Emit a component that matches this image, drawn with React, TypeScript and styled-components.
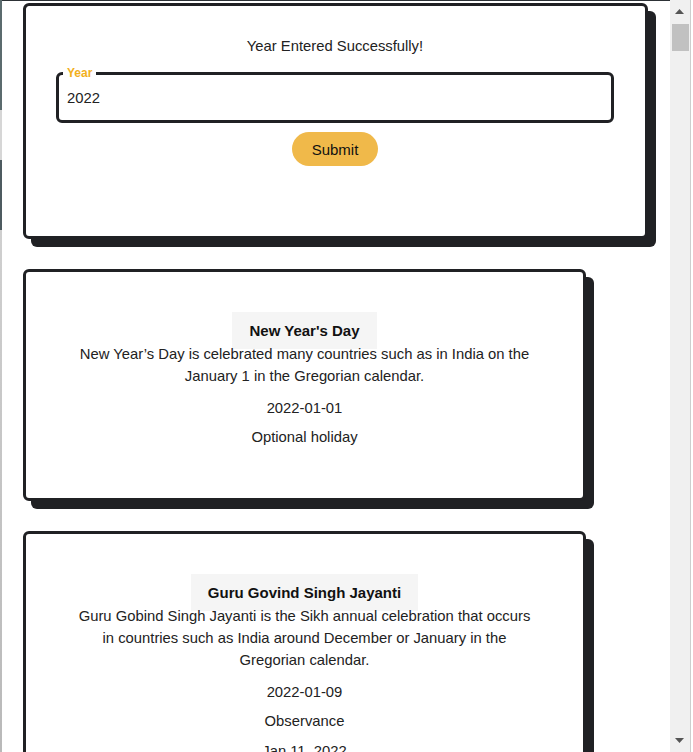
import React from "react";
import styled, { createGlobalStyle } from "styled-components";

const GlobalStyle = createGlobalStyle`
  html, body {
    margin: 0;
    padding: 0;
    height: 100%;
    overflow: hidden;
    background: #ffffff;
  }
  body {
    font-family: "Liberation Sans", Arial, sans-serif;
    color: #222222;
  }
  *, *::before, *::after { box-sizing: border-box; }
`;

const Frame = styled.div`
  display: flex;
  height: 100vh;
  background: #ffffff;
`;

const EdgeStrip = styled.div`
  flex: 0 0 2px;
  background: linear-gradient(
    to bottom,
    #5b6b6e 0,
    #5b6b6e 110px,
    #d6d6d6 110px,
    #d6d6d6 160px,
    #4e5b60 160px,
    #4e5b60 230px,
    #cfcfcf 230px,
    #b9b9b9 100%
  );
`;

const Viewport = styled.div`
  flex: 1;
  min-width: 0;
  overflow: hidden;
`;

const Rail = styled.div`
  flex: 0 0 21px;
  margin-right: 2px;
  display: flex;
  flex-direction: column;
  background: #f0f0f0;
  border-right: 1px solid #cdcdcd;
`;

const RailButton = styled.div`
  flex: 0 0 23px;
  display: flex;
  align-items: center;
  justify-content: center;
  padding-right: 1px;
`;

const Track = styled.div`
  flex: 1;
  padding: 1px 1px 0 2px;
`;

const Thumb = styled.div`
  width: 17px;
  height: 27px;
  background: #c1c1c1;
`;

const Content = styled.main`
  border-top: 1px solid #2d3236;
  padding: 2px 0 40px 21px;
  display: flex;
  flex-direction: column;
  align-items: flex-start;
  gap: 30px;
`;

const Card = styled.section<{ $width: number }>`
  width: ${(p) => p.$width}px;
  flex-shrink: 0;
  background: #ffffff;
  border: 3px solid #202124;
  border-radius: 6px;
  box-shadow: 8px 8px 0 #202124;
`;

const FormCard = styled(Card)`
  padding: 31px 31px 70px 30px;
`;

const Message = styled.p`
  margin: 0 0 11px;
  text-align: center;
  font-size: 14.8px;
  line-height: 18px;
  color: #222222;
`;

const Fieldset = styled.fieldset`
  margin: 0;
  padding: 0 4px;
  min-width: 0;
  border: 3px solid #202124;
  border-radius: 6px;
`;

const Legend = styled.legend`
  padding: 0 4px;
  font-size: 12px;
  line-height: 14px;
  font-weight: 700;
  color: #f2b01e;
`;

const YearInput = styled.input`
  display: block;
  width: 100%;
  height: 40px;
  padding: 0 4px 4px;
  border: none;
  outline: none;
  background: transparent;
  font-family: "Liberation Sans", Arial, sans-serif;
  font-size: 14.8px;
  color: #222222;
`;

const SubmitButton = styled.button`
  display: block;
  margin: 9px auto 0;
  width: 86px;
  height: 34px;
  padding: 0;
  border: none;
  border-radius: 17px;
  background: #f0b94a;
  font-family: "Liberation Sans", Arial, sans-serif;
  font-size: 15px;
  color: #111111;
  cursor: pointer;
`;

const HolidayCard = styled(Card)`
  padding: 40px 20px 50px;
  display: flex;
  flex-direction: column;
  align-items: center;
  text-align: center;
`;

const Title = styled.h3`
  margin: 0;
  padding: 10px 17px;
  background: #f5f5f5;
  font-size: 15px;
  line-height: 17px;
  font-weight: 700;
  color: #111111;
`;

const Description = styled.p`
  margin: -6px 0 0;
  max-width: 460px;
  font-size: 14.8px;
  line-height: 22px;
  color: #222222;
`;

const Line = styled.p<{ $gap: number }>`
  margin: ${(p) => p.$gap}px 0 0;
  font-size: 14.8px;
  line-height: 22px;
  color: #222222;
`;

type Holiday = {
  name: string;
  date: string;
  type: string;
  description: string;
  note?: string;
};

const holidays: Holiday[] = [
  {
    name: "New Year's Day",
    date: "2022-01-01",
    type: "Optional holiday",
    description:
      "New Year\u2019s Day is celebrated many countries such as in India on the January 1 in the Gregorian calendar.",
  },
  {
    name: "Guru Govind Singh Jayanti",
    date: "2022-01-09",
    type: "Observance",
    description:
      "Guru Gobind Singh Jayanti is the Sikh annual celebration that occurs in countries such as India around December or January in the Gregorian calendar.",
    note: "Jan 11, 2022",
  },
];

const Arrow = ({ up }: { up?: boolean }) => (
  <svg width="9" height="5" viewBox="0 0 9 5" aria-hidden="true">
    <path d={up ? "M0 5L4.5 0L9 5z" : "M0 0L4.5 5L9 0z"} fill="#555555" />
  </svg>
);

export default function App() {
  return (
    <>
      <GlobalStyle />
      <Frame>
        <EdgeStrip />
        <Viewport>
          <Content>
            <FormCard $width={625}>
              <Message>Year Entered Successfully!</Message>
              <Fieldset>
                <Legend>Year</Legend>
                <YearInput type="text" defaultValue="2022" aria-label="Year" />
              </Fieldset>
              <SubmitButton type="button">Submit</SubmitButton>
            </FormCard>
            {holidays.map((h) => (
              <HolidayCard key={h.name + h.date} $width={563}>
                <Title>{h.name}</Title>
                <Description>{h.description}</Description>
                <Line $gap={10}>{h.date}</Line>
                <Line $gap={7}>{h.type}</Line>
                {h.note && <Line $gap={8}>{h.note}</Line>}
              </HolidayCard>
            ))}
          </Content>
        </Viewport>
        <Rail>
          <RailButton>
            <Arrow up />
          </RailButton>
          <Track>
            <Thumb />
          </Track>
          <RailButton>
            <Arrow />
          </RailButton>
        </Rail>
      </Frame>
    </>
  );
}
